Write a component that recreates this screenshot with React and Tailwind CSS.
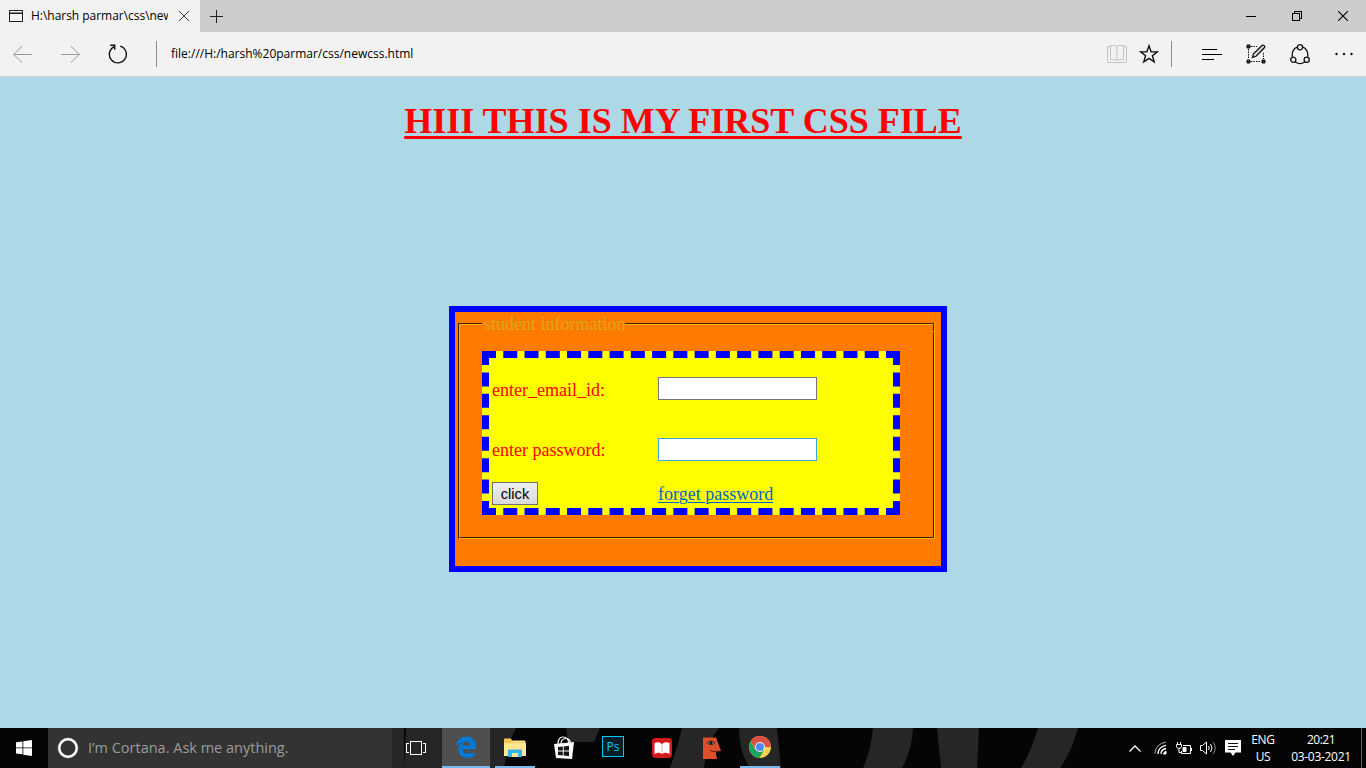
const UI = "font-['Open_Sans','Noto_Sans',sans-serif]";

function TabBar() {
  return (
    <div className="flex h-8 bg-[#cccccc] text-black">
      <div className="flex w-[200px] items-center bg-[#f2f2f2] pl-[9px]">
        <svg width="14" height="12" viewBox="0 0 14 12" className="shrink-0" shapeRendering="crispEdges">
          <path d="M0.5 .5h13v11h-13z M0 3.5h14" fill="none" stroke="#222" />
          <path d="M1 2h12" stroke="#888" />
        </svg>
        <span className="ml-2 w-[137px] overflow-hidden whitespace-nowrap text-[12px] leading-4">
          <span className="inline-block tracking-[-0.03px]">H:\harsh parmar\css\newcss.html</span>
        </span>
        <svg width="10" height="10" viewBox="0 0 10 10" className="ml-[11px] shrink-0">
          <path d="M0 0l10 10M10 0L0 10" stroke="#333" strokeWidth="1" />
        </svg>
      </div>
      <div className="flex flex-1 items-center pl-[10px]">
        <svg width="13" height="13" viewBox="0 0 13 13" shapeRendering="crispEdges">
          <path d="M6.5 0v13M0 6.5h13" stroke="#222" />
        </svg>
      </div>
      <div className="flex items-center pr-[18px]">
        <svg width="10" height="10" viewBox="0 0 10 10" shapeRendering="crispEdges">
          <path d="M0 5.5h10" stroke="#000" />
        </svg>
        <svg width="10" height="10" viewBox="0 0 10 10" className="ml-9" shapeRendering="crispEdges">
          <path d="M.5 2.5h7v7h-7zM2.5 2V.5h7v7H8" fill="none" stroke="#000" />
        </svg>
        <svg width="10" height="10" viewBox="0 0 10 10" className="ml-9">
          <path d="M0 0l10 10M10 0L0 10" stroke="#000" strokeWidth="1.1" />
        </svg>
      </div>
    </div>
  );
}

function Toolbar() {
  return (
    <div className="flex h-[45px] items-center border-b border-[#cccccc] bg-[#f2f2f2] text-black">
      <svg width="19" height="18" viewBox="0 0 19 18" className="ml-[13px]" fill="none" stroke="#999">
        <path d="M0.5 9.5H19M9.2 1L.7 9.5l8.5 8.2" />
      </svg>
      <svg width="19" height="18" viewBox="0 0 19 18" className="ml-[29px]" fill="none" stroke="#999">
        <path d="M0 9.5h18.5M9.8 1l8.5 8.5-8.5 8.2" />
      </svg>
      <svg width="20" height="20" viewBox="0 0 20 20" className="ml-7" fill="none" stroke="#111" strokeWidth="1.4">
        <path d="M12.2 2.2A8.5 8.5 0 1 1 6.4 2.6M2.2 1.2h4.5v4.6" />
      </svg>
      <div className="ml-7 h-[26px] w-px bg-[#8c8c8c]" />
      <span className="ml-[14px] whitespace-nowrap text-[12px] leading-4">file:///H:/harsh%20parmar/css/newcss.html</span>
      <div className="ml-auto flex items-center">
        <svg width="20" height="20" viewBox="0 0 20 20" fill="none" stroke="#c4c4c4">
          <path d="M3.5 2.5H.5v16h8.5l1 .9 1-.9h8.500v-16h-3M3.500 1.500H8l2 1 2-1h4.500v14H12l-2 1-2-1H3.500zM10 2.500v14" />
        </svg>
        <svg width="20" height="20" viewBox="0 0 20 20" className="ml-3" fill="none" stroke="#111" strokeWidth="1.4">
          <path d="M10 1.800l2.100 5.900 6.300.1-5 3.900 1.800 6.200L10 14.300l-5.200 3.600 1.800-6.200-5-3.900 6.300-.1z" />
        </svg>
        <div className="ml-3 h-[26px] w-px bg-[#8c8c8c]" />
        <svg width="20" height="13" viewBox="0 0 20 13" className="ml-[30px]" shapeRendering="crispEdges" stroke="#000">
          <path d="M0 1.500h15M0 6.500h20M0 11.500h12" />
        </svg>
        <svg width="20" height="20" viewBox="0 0 20 20" className="ml-6" fill="none" stroke="#111">
          <path d="M5 2.500h6M2.500 5v10M5 17.500h10M17.500 9v6" strokeDasharray="1.500 1" />
          <path d="M1 1h3v3H1zM1 16h3v3H1zM16 16h3v3h-3z" fill="#333" />
          <path d="M6.500 13.500l1-3.700L16.300 1.300c1.200-.8 3 .9 2.200 2.200L10 12.300z" fill="#ddd" strokeWidth="1.300" />
        </svg>
        <svg width="20" height="21" viewBox="0 0 20 21" className="ml-6" fill="none" stroke="#111" strokeWidth="1.300">
          <path d="M7.200 3.200C3.800 4.500 1.800 8 2.300 12.800M12.800 3.200c3.400 1.300 5.400 4.800 4.900 9.600M5.300 18c2.800 2 6.600 2 9.400 0" />
          <circle cx="10" cy="3.300" r="2.600" />
          <circle cx="3.300" cy="15.800" r="2.600" />
          <circle cx="16.700" cy="15.800" r="2.600" />
        </svg>
        <svg width="18" height="4" viewBox="0 0 18 4" className="ml-[25px] mr-[13px]" fill="#111">
          <circle cx="1.500" cy="2" r="1.200" />
          <circle cx="9" cy="2" r="1.200" />
          <circle cx="16.500" cy="2" r="1.200" />
        </svg>
      </div>
    </div>
  );
}

function StudentForm() {
  return (
    <div className="ml-[449px] mt-[161px] h-[266px] w-[498px] border-[6px] border-[#0000ff] bg-[#ff7b00] pl-[3px] pt-[3px] text-[18px] leading-[20px]">
      <fieldset className="h-[224px] w-[477px]">
        <div className="flex h-[17px]">
          <div className="mt-[8px] w-6 border-l border-t border-[#3d2400]">
            <div className="h-full border-l border-t border-[#ffb000]" />
          </div>
          <div className="h-4 w-[143px] whitespace-nowrap pl-[2px] leading-[19px] text-[#daa520]">student information</div>
          <div className="mt-[8px] flex-1 border-r border-t border-[#ffb000]">
            <div className="h-full border-r border-t border-[#3d2400] -mt-px">
              <div className="h-full border-t border-[#ffb000]" />
            </div>
          </div>
        </div>
        <div className="h-[207px] border-b border-l border-r border-b-[#ffb000] border-l-[#3d2400] border-r-[#ffb000]">
          <div className="h-full border-b border-l border-r border-b-[#3d2400] border-l-[#ffb000] border-r-[#3d2400] pl-[22px] pt-[19px]">
            <div className="grid h-[164px] w-[418px] grid-cols-[166px_1fr] grid-rows-[61px_60px_1fr] border-[7px] border-dashed border-[#0000ff] bg-[#ffff00] pl-[3px] text-[#ff0000]">
              <label className="pt-[22px]">enter_email_id:</label>
              <input className="mt-[19px] h-[23px] w-[159px] border border-[#767676] bg-white" />
              <label className="pt-[21px]">enter password:</label>
              <input type="password" className="mt-[19px] h-[23px] w-[159px] border border-[#3ba5d8] bg-white" />
              <button className="mt-[3px] h-[23px] w-[46px] border border-[#707070] bg-linear-to-b from-[#efefef] to-[#d9d9d9] font-['Liberation_Sans',sans-serif] text-[14.6px] leading-[20px] text-black">
                click
              </button>
              <a className="pt-[5px] text-[#0066cc] underline decoration-1 underline-offset-2">forget password</a>
            </div>
          </div>
        </div>
      </fieldset>
    </div>
  );
}

function Taskbar() {
  return (
    <div className="relative flex h-10 bg-[#050505] text-white">
      <svg width="1366" height="40" viewBox="0 0 1366 40" className="absolute inset-0" fill="#262626">
        <path d="M392 0h12v40h-12zM406 0h44v40h-46zM490 0h26q-8 14-12 40h-14zM566 0h34l-6 14h-26zM682 0h37q-12 14-15 40h-34q8-22 12-40zM739 0h38l4 40h-31q-11-16-11-40zM873 0h40q-1 22-11 40h-39q8-18 10-40zM937 0h42l-2 40h-36zM1038 0h40q-7 25-18 40h-39q10-16 17-40z" />
      </svg>
      <div className="relative flex w-12 items-center justify-center">
        <svg width="16" height="16" viewBox="0 0 16 16" fill="#fff">
          <path d="M0 2.300L6.500 1.400v6H0zM7.300 1.300L16 0v7.400H7.300zM0 8.300h6.500v6L0 13.500zM7.300 8.300H16V16l-8.700-1.300z" />
        </svg>
      </div>
      <div className="relative flex w-[344px] items-center bg-[#333333] pl-[9px]">
        <svg width="22" height="22" viewBox="0 0 22 22" fill="none">
          <circle cx="11" cy="11" r="10" stroke="#777" />
          <circle cx="11" cy="11" r="8.700" stroke="#fff" strokeWidth="2.400" />
        </svg>
        <span className="ml-[9px] whitespace-nowrap text-[14.500px] leading-5 text-[#9b9b9b]">I’m Cortana. Ask me anything.</span>
      </div>
      <div className="relative flex w-[50px] items-center justify-center pr-[2px]">
        <svg width="20" height="16" viewBox="0 0 20 16" fill="none" stroke="#fff" shapeRendering="crispEdges">
          <path d="M4.500 1.500h11v13h-11zM3 3.500H.5v9H3M17 3.500h2.500v9H17" />
        </svg>
      </div>
      <div className="relative flex w-12 items-center justify-center border-b-2 border-[#76b9ed] bg-[#4f4f4f]">
        <svg width="20" height="22" viewBox="0 0 20 22" fill="#0078d7">
          <path d="M0 10.200C.8 4.300 4.600.6 10 .6c6 0 10 4 10 9.700v3H6.500c.2 3 2.600 4.300 5.600 4.300 2.400 0 4.500-.7 6.200-1.700v4.400c-2 1.100-4.400 1.700-7.200 1.700-5.400 0-8.800-3-8.800-7.900 0-3.300 1.700-6.100 4.800-7.600C3.900 6.800 1.700 8 0 10.200zm6.600-.8h7.300c0-2.700-1.100-4-3.500-4-2.100 0-3.400 1.500-3.800 4z" />
        </svg>
      </div>
      <div className="relative ml-[5px] flex w-10 items-center justify-center border-b-2 border-[#76b9ed]">
        <svg width="22" height="19" viewBox="0 0 22 19">
          <path d="M0 1.500Q0 .5 1 .5h6l1 2h12.500q1 0 1 1V18H0z" fill="#f5c951" />
          <path d="M0 5h22v13H0z" fill="#ffe793" />
          <path d="M9 3h12v1H9z" fill="#fff2c0" />
          <path d="M4 19v-6.500q0-1 1-1h12q1 0 1 1V19h-4v-4H8v4z" fill="#35b4e9" />
          <path d="M8 15h6v4H8z" fill="#ffe793" />
        </svg>
      </div>
      <div className="relative ml-[18px] flex items-center">
        <svg width="22" height="24" viewBox="0 0 22 24">
          <path d="M5 8C5 3 7 1 10 1s5 2 6 6M8 8c0-4 2-5.500 5-5.500 2 0 4 1 4.500 4.500" fill="none" stroke="#fff" strokeWidth="1.200" />
          <path d="M1 8l20-2-2 17L3 22z" fill="#fff" />
          <path d="M5 11l4.800-.5v4H5zM10.700 10.400l5.300-.6v4.700h-5.300zM5 15.500h4.800v4L5 19zM10.700 15.500H16v4.700l-5.300-.6z" fill="#181818" />
        </svg>
      </div>
      <div className="relative ml-[27px] flex items-center">
        <div className="mb-[3px] flex h-[21px] w-[22px] items-center justify-center border-[1.500px] border-[#00c8f8] bg-[#061e26] text-[12px] leading-none text-[#00c8f8]">Ps</div>
      </div>
      <div className="relative ml-7 flex items-center">
        <svg width="20" height="20" viewBox="0 0 20 20">
          <rect width="20" height="20" rx="4" fill="#d7191b" />
          <path d="M2.500 5Q7 3 10 6q3-3 7.500-1v11Q13 13.500 10 16q-3-2.500-7.500 0z" fill="#fff" />
          <path d="M10 6v9" stroke="#d88" strokeWidth=".7" />
        </svg>
      </div>
      <div className="relative ml-[30px] flex items-center">
        <svg width="19" height="22" viewBox="0 0 19 22">
          <path d="M1 .5h13l5 13.500-5 .5v2.500l1 5H1z" fill="#df4e29" />
          <path d="M5 5.800q4-3.500 8 0-4 3.500-8 0" fill="#b7a38f" stroke="#3a2522" />
          <circle cx="9" cy="5.800" r="1.600" fill="#101820" />
          <path d="M8 13.500q3 2 10 .5" fill="none" stroke="#5d2217" />
        </svg>
      </div>
      <div className="relative ml-[19px] flex w-10 items-center justify-center border-b-2 border-[#76b9ed]">
        <svg width="22" height="22" viewBox="0 0 22 22">
          <circle cx="11" cy="11" r="11" fill="#fbd04b" />
          <path d="M11 11H22A11 11 0 0 0 1.500 5.500z" fill="#dd5144" />
          <path d="M11 0a11 11 0 0 1 9.700 6H11L6.600 13.500 1.500 5.500A11 11 0 0 1 11 0z" fill="#dd5144" />
          <path d="M1.500 5.500l5 8.200L11 16l4.300-2.500L10.500 22A11 11 0 0 1 1.500 5.500z" fill="#1da362" />
          <circle cx="11" cy="11" r="5" fill="#f4f4f4" />
          <circle cx="11" cy="11" r="4" fill="#4c8bf5" />
        </svg>
      </div>
      <div className="relative ml-auto flex items-center">
        <svg width="12" height="7" viewBox="0 0 12 7" fill="none" stroke="#fff" strokeWidth="1.300">
          <path d="M.5 6.500L6 1l5.500 5.500" />
        </svg>
        <svg width="14" height="14" viewBox="0 0 14 14" className="ml-[13px]" fill="none" stroke="#fff">
          <path d="M1 12.500Q1.500 3 12 1" stroke="#aaa" />
          <path d="M4 13Q4 6 12 4.300M7 13q0-4.500 5-5.500" strokeWidth="1.300" />
          <path d="M9.500 13q0-2 2.500-2.700V13z" fill="#fff" />
        </svg>
        <svg width="16" height="13" viewBox="0 0 16 13" className="ml-2" fill="none" stroke="#fff">
          <path d="M7 3.500h7.500v8h-9V9M15.500 6v3M1.500 0v2M4.500 0v2M.5 2.500h5v2q-.5 2-2.500 2t-2.500-2zM3 6.500v4h2" />
          <path d="M7 5.500h3v4H7z" fill="#fff" />
        </svg>
        <svg width="17" height="14" viewBox="0 0 17 14" className="ml-2" fill="none" stroke="#fff">
          <path d="M.5 4.500h2L6.500 1v12L2.500 9.500h-2zM8.500 5q1.500 2 0 4M10.500 3q3 4 0 8" />
          <path d="M13 1q4.500 6 0 12" stroke="#888" />
        </svg>
        <svg width="16" height="16" viewBox="0 0 16 16" className="ml-2">
          <path d="M0 0h16v12.500h-5.500L8 16l-2.500-3.500H0z" fill="#fff" />
          <path d="M3 3.500h10M3 6.500h10M3 9.500h7" stroke="#111" />
        </svg>
        <div className="ml-[9px] flex w-[26px] flex-col items-center whitespace-nowrap text-[12px] leading-[17px]">
          <span className="tracking-[-0.300px]">ENG</span>
          <span className="tracking-[-0.300px]">US</span>
        </div>
        <div className="ml-4 flex w-[58px] flex-col items-center whitespace-nowrap text-[12px] leading-[17px]">
          <span className="tracking-[-0.500px]">20:21</span>
          <span className="tracking-[-0.300px]">03-03-2021</span>
        </div>
        <div className="ml-[11px] mr-1 h-10 w-px bg-[#666666]" />
      </div>
    </div>
  );
}

export default function App() {
  return (
    <div className={`flex h-[768px] w-[1366px] flex-col overflow-hidden ${UI} font-['Open_Sans','Noto_Sans',sans-serif]`}>
      <TabBar />
      <Toolbar />
      <main className="flex-1 bg-[#add8e6] font-['Liberation_Serif',serif]">
        <h1 className="mt-6 h-[44px] text-center text-[36px] font-bold leading-[41px] text-[#ff0000] underline decoration-[3px] underline-offset-[3px]">
          HIII THIS IS MY FIRST CSS FILE
        </h1>
        <StudentForm />
      </main>
      <Taskbar />
    </div>
  );
}
